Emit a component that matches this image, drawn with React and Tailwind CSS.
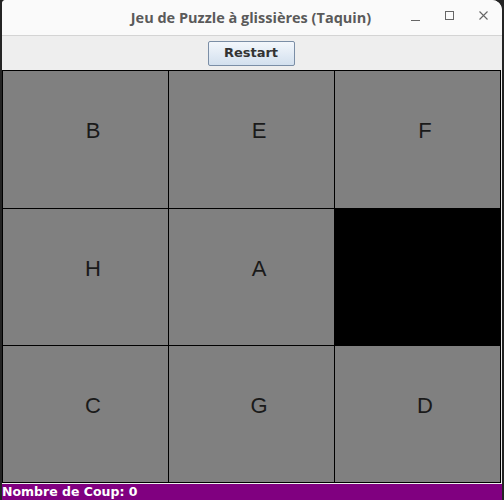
const tiles = ['B', 'E', 'F', 'H', 'A', '', 'C', 'G', 'D']

export default function App() {
  return (
    <div className="w-[504px] h-[500px] flex bg-[#242424]">
      <div className="ml-[2px] w-[500px] h-[500px] flex flex-col bg-[#eeeeee] rounded-tr-[10px] rounded-tl-[4px] overflow-hidden">
        {/* title bar */}
        <div className="h-[36px] shrink-0 relative flex items-center justify-center bg-[#fafafa] border-b border-[#d4d4d4]">
          <span className="text-[14.5px] font-bold text-[#5a5a5a] pr-[2px]" style={{ fontFamily: '"Open Sans", "DejaVu Sans", sans-serif' }}>
            Jeu de Puzzle à glissières (Taquin)
          </span>
          <div className="absolute right-[12px] top-[10px] flex items-center gap-[22px] text-[#666]">
            <svg width="12" height="12" viewBox="0 0 12 12"><path d="M1 10.5h9" stroke="currentColor" strokeWidth="1" /></svg>
            <svg width="12" height="12" viewBox="0 0 12 12"><rect x="1.5" y="1.5" width="8" height="8" fill="none" stroke="currentColor" strokeWidth="1" /></svg>
            <svg width="12" height="12" viewBox="0 0 12 12"><path d="M1.5 1.5l8 8M9.5 1.5l-8 8" stroke="currentColor" strokeWidth="1.1" /></svg>
          </div>
        </div>

        {/* toolbar */}
        <div className="h-[34px] shrink-0 flex items-center justify-center">
          <button className="w-[87px] h-[25px] -ml-[2px] border border-[#7b8ea6] rounded-[2px] bg-gradient-to-b from-[#f3f7fc] to-[#d3e0ee] text-[13px] font-bold text-[#333]" style={{ fontFamily: '"DejaVu Sans", sans-serif' }}>
            Restart
          </button>
        </div>

        {/* board */}
        <div className="w-[499px] h-[413px] shrink-0 grid grid-cols-[165px_165px_165px] grid-rows-[137px_136px_136px] gap-px bg-black border border-black">
          {tiles.map((t, i) => (
            <div
              key={i}
              className={`flex items-center justify-center pl-[15px] pb-[18px] text-[22px] text-[#1a1a1a] ${t ? 'bg-[#808080]' : 'bg-black'}`}
              style={{ fontFamily: '"Liberation Sans", Arial, sans-serif' }}
            >
              {t}
            </div>
          ))}
        </div>

        {/* status bar */}
        <div className="mt-px flex-1 bg-[#800080] text-white text-[12.5px] font-bold leading-[16px]" style={{ fontFamily: '"DejaVu Sans", sans-serif' }}>
          Nombre de Coup: 0
        </div>
      </div>
    </div>
  )
}
